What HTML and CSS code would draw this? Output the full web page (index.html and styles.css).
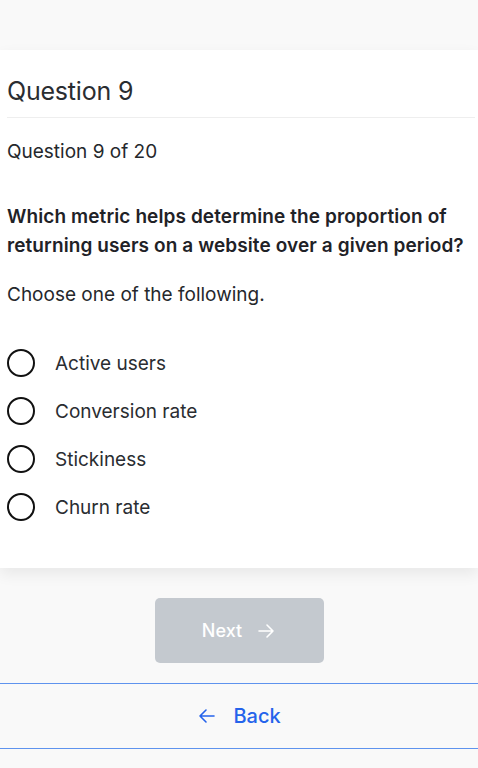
FILE: index.html
```html
<!DOCTYPE html>
<html lang="en">
<head>
    <meta charset="UTF-8">
    <meta name="viewport" content="width=device-width,user-scalable=no">
    <title>Question 9</title>
    <link rel="stylesheet" href="styles.css">
</head>
<body>
<div class="top"></div>
<section class="card">
    <h1 class="title">Question 9</h1>
    <p class="count">Question 9 of 20</p>
    <p class="question">Which metric helps determine the proportion of returning users on a website over a given period?</p>
    <p class="hint">Choose one of the following.</p>
    <ul class="options">
        <li><span class="radio"></span>Active users</li>
        <li><span class="radio"></span>Conversion rate</li>
        <li><span class="radio"></span>Stickiness</li>
        <li><span class="radio"></span>Churn rate</li>
    </ul>
</section>
<div class="actions">
    <button class="next" disabled>Next
        <svg width="20" height="20" viewBox="0 0 20 20" fill="none" stroke="currentColor" stroke-width="1.6" stroke-linecap="round" stroke-linejoin="round"><path d="M3 10h14M11 4l6 6-6 6"/></svg>
    </button>
</div>
<a href="javascript:;" class="back">
    <svg width="20" height="20" viewBox="0 0 20 20" fill="none" stroke="currentColor" stroke-width="1.6" stroke-linecap="round" stroke-linejoin="round"><path d="M17 10H3M9 4l-6 6 6 6"/></svg>
    Back
</a>
</body>
</html>
```

FILE: styles.css
```css
html,body{ height:100%; }
body{
    margin:0;
    background:#f9f9f9;
    font-family:Inter, "Noto Sans", sans-serif;
    color:#1f2328;
}
p,ul,h1{ margin:0; padding:0; }
.top{ height:50px; }
.card{
    background:#fff;
    padding:26px 3px 37px 7px;
    box-shadow:0 6px 14px rgba(0,0,0,.07);
}
.card .title{
    font-size:25px;
    line-height:30px;
    font-weight:400;
    letter-spacing:-0.2px;
    color:#2a2d31;
    padding-bottom:11px;
    border-bottom:1px solid #eeeeee;
}
.card .count{
    font-size:19px;
    line-height:26px;
    margin-top:21px;
    color:#25282c;
}
.card .question{
    font-size:19px;
    line-height:29px;
    font-weight:600;
    letter-spacing:0.1px;
    margin-top:37px;
    color:#1f2227;
}
.card .hint{
    font-size:19px;
    line-height:26px;
    margin-top:22px;
    color:#25282c;
}
.card .options{
    list-style:none;
    margin-top:31px;
}
.card .options li{
    display:flex;
    align-items:center;
    height:48px;
    font-size:19px;
    color:#2a2d31;
}
.card .options .radio{
    width:24px;
    height:24px;
    border:2px solid #111;
    border-radius:50%;
    margin-right:20px;
}
.actions{
    display:flex;
    justify-content:center;
    padding:30px 0 20px;
}
.actions .next{
    width:169px;
    height:65px;
    border:0;
    border-radius:5px;
    background:#c4c9cf;
    color:#fff;
    font-family:inherit;
    font-size:18px;
    font-weight:500;
    display:flex;
    align-items:center;
    justify-content:center;
    gap:14px;
}
.back{
    display:flex;
    align-items:center;
    justify-content:center;
    gap:16px;
    height:64px;
    border-top:1px solid #5f93ee;
    border-bottom:1px solid #5f93ee;
    color:#2563eb;
    font-size:20px;
    font-weight:500;
    text-decoration:none;
}
```
